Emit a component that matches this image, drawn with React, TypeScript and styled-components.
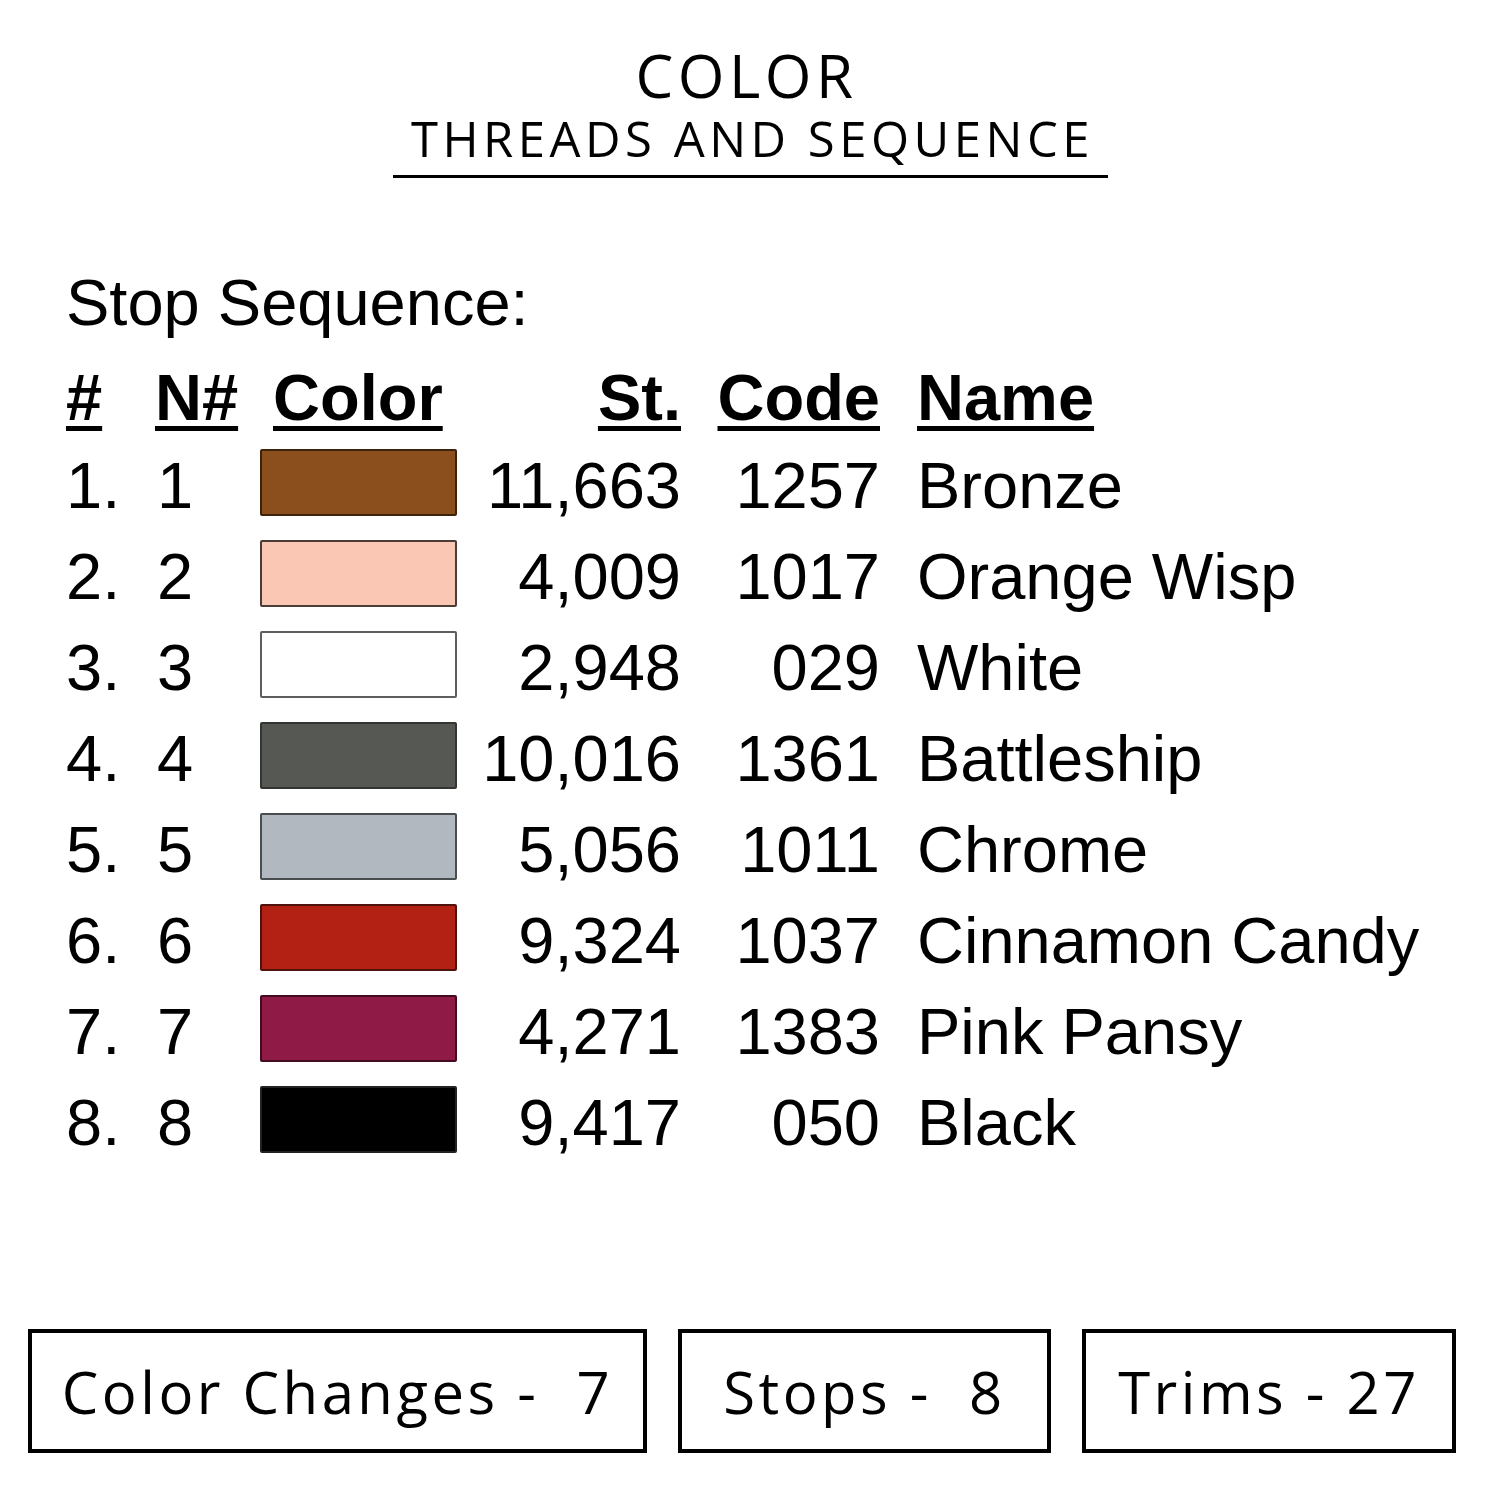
import React from "react";
import styled, { createGlobalStyle } from "styled-components";

const Global = createGlobalStyle`
  html, body { margin: 0; padding: 0; background: #fff; }
  body { font-family: "Liberation Sans", Arial, sans-serif; color: #000; }
`;

const Page = styled.div`
  width: 1500px;
  height: 1500px;
  background: #fff;
  display: flex;
  flex-direction: column;
  overflow: hidden;
`;

const Heading = styled.header`
  display: flex;
  flex-direction: column;
  align-items: center;
  padding-top: 42px;
`;

const Title = styled.h1`
  margin: 0;
  font-family: "Open Sans", sans-serif;
  font-weight: 500;
  font-size: 60px;
  line-height: 66px;
  letter-spacing: 4.5px;
  padding-right: 7px;
`;

const Subtitle = styled.h2`
  margin: 1px 0 0;
  font-family: "Open Sans", sans-serif;
  font-weight: 400;
  font-size: 49px;
  line-height: 58px;
  letter-spacing: 4.5px;
  width: 715px;
  box-sizing: border-box;
  padding-left: 5px;
  text-align: center;
  padding-bottom: 8px;
  border-bottom: 3px solid #000;
`;

const Section = styled.section`
  margin-top: 89px;
  padding-left: 66px;
  font-family: "Liberation Sans", Arial, sans-serif;
  font-size: 65px;
`;

const Caption = styled.div`
  line-height: 72px;
`;

const Table = styled.div`
  margin-top: 23px;
  display: grid;
  grid-template-columns: 89px 105px 197px 224px 199px auto;
  grid-template-rows: 78px;
  grid-auto-rows: 91px;
  align-items: center;
  line-height: 72px;
`;

const HeadCell = styled.div<{ $align?: string; $pad?: number }>`
  font-weight: 700;
  text-decoration: underline;
  text-decoration-thickness: 5px;
  text-underline-offset: 6px;
  text-align: ${(p) => p.$align || "left"};
  padding-left: ${(p) => p.$pad || 0}px;
  align-self: start;
  height: 78px;
`;

const Cell = styled.div<{ $align?: string; $pad?: number }>`
  text-align: ${(p) => p.$align || "left"};
  padding-left: ${(p) => p.$pad || 0}px;
  white-space: nowrap;
  line-height: 91px;
`;

const Swatch = styled.div<{ $color: string; $edge: string }>`
  width: 197px;
  height: 67px;
  box-sizing: border-box;
  background: ${(p) => p.$color};
  border: 2px solid ${(p) => p.$edge};
  border-radius: 2px;
  margin-top: -6px;
`;

const Footer = styled.div`
  margin-top: auto;
  margin-bottom: 47px;
  padding-left: 28px;
  display: flex;
  gap: 31px;
`;

const StatBox = styled.div<{ $w: number }>`
  width: ${(p) => p.$w}px;
  height: 124px;
  box-sizing: border-box;
  border: 4px solid #000;
  display: flex;
  align-items: center;
  justify-content: center;
  font-family: "Open Sans", sans-serif;
  font-size: 58px;
  letter-spacing: 3.5px;
  white-space: pre;
`;

const rows = [
  { n: 1, color: "#8B4F1D", edge: "#3e230c", st: "11,663", code: "1257", name: "Bronze" },
  { n: 2, color: "#F9C7B4", edge: "#4a3d38", st: "4,009", code: "1017", name: "Orange Wisp" },
  { n: 3, color: "#FFFFFF", edge: "#5e5e5e", st: "2,948", code: "029", name: "White" },
  { n: 4, color: "#555853", edge: "#333532", st: "10,016", code: "1361", name: "Battleship" },
  { n: 5, color: "#B2B8C0", edge: "#4a4d50", st: "5,056", code: "1011", name: "Chrome" },
  { n: 6, color: "#B32014", edge: "#4f120c", st: "9,324", code: "1037", name: "Cinnamon Candy" },
  { n: 7, color: "#8E1A45", edge: "#420b20", st: "4,271", code: "1383", name: "Pink Pansy" },
  { n: 8, color: "#000000", edge: "#222", st: "9,417", code: "050", name: "Black" },
];

export default function App() {
  return (
    <Page>
      <Global />
      <Heading>
        <Title>COLOR</Title>
        <Subtitle>THREADS AND SEQUENCE</Subtitle>
      </Heading>
      <Section>
        <Caption>Stop Sequence:</Caption>
        <Table>
          <HeadCell>#</HeadCell>
          <HeadCell>N#</HeadCell>
          <HeadCell $pad={13}>Color</HeadCell>
          <HeadCell $align="right">St.</HeadCell>
          <HeadCell $align="right">Code</HeadCell>
          <HeadCell $pad={37}>Name</HeadCell>
          {rows.map((r) => (
            <React.Fragment key={r.n}>
              <Cell>{r.n}.</Cell>
              <Cell $pad={2}>{r.n}</Cell>
              <Swatch $color={r.color} $edge={r.edge} />
              <Cell $align="right">{r.st}</Cell>
              <Cell $align="right">{r.code}</Cell>
              <Cell $pad={37}>{r.name}</Cell>
            </React.Fragment>
          ))}
        </Table>
      </Section>
      <Footer>
        <StatBox $w={619}>{"Color Changes -  7"}</StatBox>
        <StatBox $w={373}>{"Stops -  8"}</StatBox>
        <StatBox $w={374}>{"Trims - 27"}</StatBox>
      </Footer>
    </Page>
  );
}
